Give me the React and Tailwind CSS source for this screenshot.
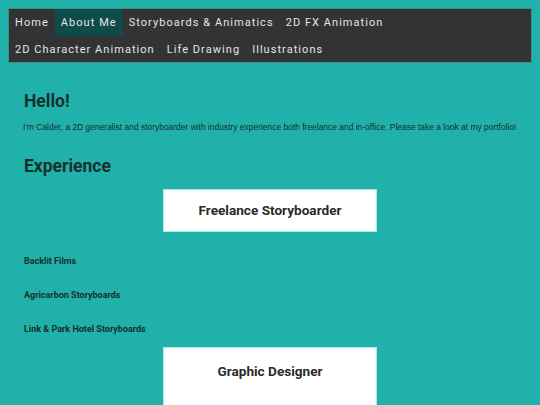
const navRow1 = ["Home", "About Me", "Storyboards & Animatics", "2D FX Animation"];
const navRow2 = ["2D Character Animation", "Life Drawing", "Illustrations"];

function NavItem({ label, active }) {
  return (
    <a
      href="#"
      className={`block px-[6px] h-[26.5px] leading-[27px] text-[11px] tracking-[1.05px] text-[#e4e4e4] ${active ? "bg-[#0d4c48]" : ""}`}
    >
      {label}
    </a>
  );
}

function RoleCard({ title }) {
  return (
    <div className="mx-auto w-[214px] h-[43px] bg-white border border-[#a8eeee] flex items-center justify-center">
      <h3 className="text-[13.6px] font-bold text-[#2b2b2b]">{title}</h3>
    </div>
  );
}

export default function App() {
  return (
    <div
      className="min-h-[405px] bg-[#20b2aa] p-2 overflow-hidden"
      style={{ fontFamily: 'Roboto, "Liberation Sans", Arial, sans-serif' }}
    >
      <nav className="bg-[#333333] border border-[#3b8f8b]">
        <div className="flex">
          {navRow1.map((item) => (
            <NavItem key={item} label={item} active={item === "About Me"} />
          ))}
        </div>
        <div className="flex">
          {navRow2.map((item) => (
            <NavItem key={item} label={item} />
          ))}
        </div>
      </nav>

      <main className="px-[16px] text-[#172f2d]">
        <h1 className="mt-[27px] text-[17.5px] font-bold leading-[22px]">Hello!</h1>
        <p
          className="mt-[9px] -ml-[1px] text-[8.45px] leading-[12px] whitespace-nowrap"
          style={{ fontFamily: '"Liberation Sans", Arial, sans-serif' }}
        >
          I'm Calder, a 2D generalist and storyboarder with industry experience both freelance and in-office. Please take a look at my portfolio!
        </p>
        <h2 className="mt-[22px] text-[17.5px] font-bold leading-[22px]">Experience</h2>

        <div className="mt-[12px]">
          <RoleCard title="Freelance Storyboarder" />
        </div>

        <ul className="mt-[23px] text-[9px] font-bold leading-[12px] flex flex-col gap-[22px]">
          <li>Backlit Films</li>
          <li>Agricarbon Storyboards</li>
          <li>Link &amp; Park Hotel Storyboards</li>
        </ul>

        <div className="mt-[12px]">
          <div className="mx-auto w-[214px] h-[80px] bg-white border border-[#a8eeee] pt-[13px] text-center">
            <h3 className="text-[13.6px] font-bold text-[#2b2b2b]">Graphic Designer</h3>
          </div>
        </div>
      </main>
    </div>
  );
}
